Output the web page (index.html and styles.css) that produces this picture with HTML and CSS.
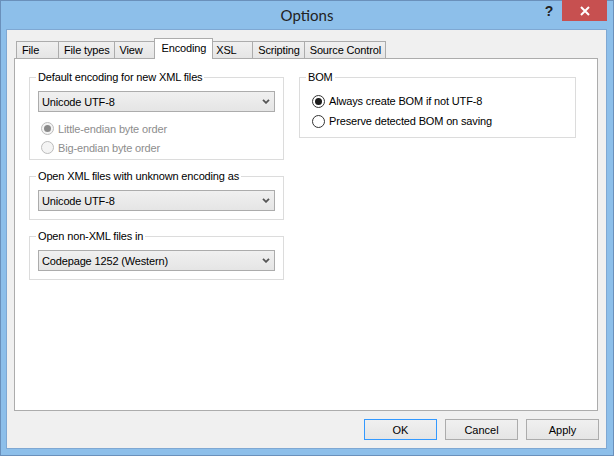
FILE: index.html
```html
<!DOCTYPE html>
<html lang="en">
<head>
    <meta charset="UTF-8">
    <title>Options</title>
    <link rel="stylesheet" href="styles.css">
</head>
<body>
    <div class="window">
        <div class="titlebar">
            <span class="title">Options</span>
            <div class="controls">
                <span class="help">?</span>
                <span class="close">
                    <svg width="10" height="10" viewBox="0 0 10 10"><path d="M1 1 L9 9 M9 1 L1 9" stroke="#fff" stroke-width="2" fill="none"/></svg>
                </span>
            </div>
        </div>

        <div class="client">
            <div class="tabs">
                <span class="tab">File</span>
                <span class="tab">File types</span>
                <span class="tab">View</span>
                <span class="tab active">Encoding</span>
                <span class="tab">XSL</span>
                <span class="tab">Scripting</span>
                <span class="tab">Source Control</span>
            </div>

            <div class="panel">
                <div class="col-left">
                    <fieldset class="group group-first">
                        <legend>Default encoding for new XML files</legend>
                        <div class="combo">
                            <span>Unicode UTF-8</span>
                            <svg class="arrow" width="8" height="5" viewBox="0 0 8 5"><polyline points="1,0.8 4,3.8 7,0.8" stroke="#555" stroke-width="1.8" fill="none"/></svg>
                        </div>
                        <div class="options options-sub">
                            <div class="option disabled"><span class="mark checked"></span>Little-endian byte order</div>
                            <div class="option disabled"><span class="mark"></span>Big-endian byte order</div>
                        </div>
                    </fieldset>

                    <fieldset class="group">
                        <legend>Open XML files with unknown encoding as</legend>
                        <div class="combo">
                            <span>Unicode UTF-8</span>
                            <svg class="arrow" width="8" height="5" viewBox="0 0 8 5"><polyline points="1,0.8 4,3.8 7,0.8" stroke="#555" stroke-width="1.8" fill="none"/></svg>
                        </div>
                    </fieldset>

                    <fieldset class="group">
                        <legend>Open non-XML files in</legend>
                        <div class="combo">
                            <span>Codepage 1252 (Western)</span>
                            <svg class="arrow" width="8" height="5" viewBox="0 0 8 5"><polyline points="1,0.8 4,3.8 7,0.8" stroke="#555" stroke-width="1.8" fill="none"/></svg>
                        </div>
                    </fieldset>
                </div>

                <div class="col-right">
                    <fieldset class="group group-bom">
                        <legend>BOM</legend>
                        <div class="options options-bom">
                            <div class="option"><span class="mark checked"></span>Always create BOM if not UTF-8</div>
                            <div class="option"><span class="mark"></span>Preserve detected BOM on saving</div>
                        </div>
                    </fieldset>
                </div>
            </div>

            <div class="buttons">
                <button class="btn default">OK</button>
                <button class="btn">Cancel</button>
                <button class="btn">Apply</button>
            </div>
        </div>
    </div>
</body>
</html>
```

FILE: styles.css
```css
/* General */
* {
    box-sizing: border-box;
}
body {
    margin: 0;
    font-family: "Liberation Sans", Arial, sans-serif;
    font-size: 11px;
    letter-spacing: -0.15px;
    color: #000;
}

/* Window frame */
.window {
    width: 614px;
    height: 456px;
    background: #8dbfea;
    border: 1px solid #6a90bb;
    display: flex;
    flex-direction: column;
}
.titlebar {
    height: 28px;
    display: grid;
    grid-template-columns: 1fr auto 1fr;
}
.title {
    grid-column: 2;
    font-family: "Lato", "Liberation Sans", sans-serif;
    font-size: 15px;
    letter-spacing: 0;
    line-height: 28px;
    color: #222;
}
.controls {
    grid-column: 3;
    justify-self: end;
    display: flex;
    margin-top: -1px;
    margin-right: 6px;
}
.help {
    width: 26px;
    height: 21px;
    display: flex;
    align-items: center;
    justify-content: center;
    font-weight: bold;
    font-size: 14px;
    color: #222;
}
.close {
    width: 45px;
    height: 21px;
    background: #c75050;
    display: flex;
    align-items: center;
    justify-content: center;
}

/* Client area */
.client {
    flex: 1;
    margin: 0 6px 6px 5px;
    border: 1px solid #7fa8d3;
    background: #f0f0f0;
    display: flex;
    flex-direction: column;
    padding: 8px 0 8px 0;
}

/* Tabs */
.tabs {
    height: 20px;
    display: flex;
    align-items: flex-end;
    padding-left: 9px;
}
.tab {
    height: 17px;
    min-width: 43px;
    padding: 0 4px 0 5px;
    line-height: 16px;
    border: 1px solid #acacac;
    border-bottom: none;
    margin-right: -1px;
    background: linear-gradient(#f0f0f0, #e5e5e5);
    white-space: nowrap;
}
.tab.active {
    position: relative;
    z-index: 1;
    height: 21px;
    line-height: 18px;
    padding: 0 6px 0 7px;
    margin: 0 -3px -1px -2px;
    background: #fff;
}

/* Tab page */
.panel {
    flex: 1;
    margin: 0 8px 0 7px;
    border: 1px solid #acacac;
    background: #fff;
    padding: 11px 0 0 14px;
    display: flex;
    align-items: flex-start;
    gap: 15px;
}
.col-left {
    width: 255px;
    display: flex;
    flex-direction: column;
    gap: 9px;
}
.col-right {
    width: 277px;
}

/* Group boxes */
.group {
    margin: 0;
    min-width: 0;
    border: 1px solid #dcdcdc;
    padding: 7px 8px 8px;
}
.group legend {
    padding: 0 2px;
    margin-left: -2px;
    line-height: 14px;
}
.group-first {
    padding-bottom: 2px;
}
.group-bom {
    padding-bottom: 6px;
}

/* Combo boxes */
.combo {
    height: 21px;
    border: 1px solid #acacac;
    background: linear-gradient(#f0f0f0, #e5e5e5);
    display: flex;
    align-items: center;
    justify-content: space-between;
    padding: 0 4px 0 3px;
}
.arrow {
    display: block;
}

/* Radio buttons */
.options-sub {
    margin: 7px 0 0 3px;
}
.options-sub .option {
    height: 19px;
}
.options-bom {
    margin-left: 4px;
}
.option {
    height: 20px;
    display: flex;
    align-items: center;
    gap: 4px;
}
.mark {
    width: 13px;
    height: 13px;
    border-radius: 50%;
    border: 1px solid #333;
    background: #fff;
    display: flex;
    align-items: center;
    justify-content: center;
}
.mark.checked::after {
    content: "";
    width: 7px;
    height: 7px;
    border-radius: 50%;
    background: #1c1c1c;
}
.option.disabled {
    color: #8d8d8d;
}
.option.disabled .mark {
    border-color: #bcbcbc;
    background: #f4f4f4;
}
.option.disabled .mark.checked::after {
    background: #8a8a8a;
}

/* Dialog buttons */
.buttons {
    display: flex;
    justify-content: flex-end;
    gap: 8px;
    margin-top: 8px;
    padding-right: 7px;
}
.btn {
    width: 73px;
    height: 21px;
    border: 1px solid #acacac;
    background: linear-gradient(#f0f0f0, #e5e5e5);
    font-family: "Liberation Sans", Arial, sans-serif;
    font-size: 11px;
    color: #000;
    padding: 0;
}
.btn.default {
    border-color: #3399ff;
}
```
